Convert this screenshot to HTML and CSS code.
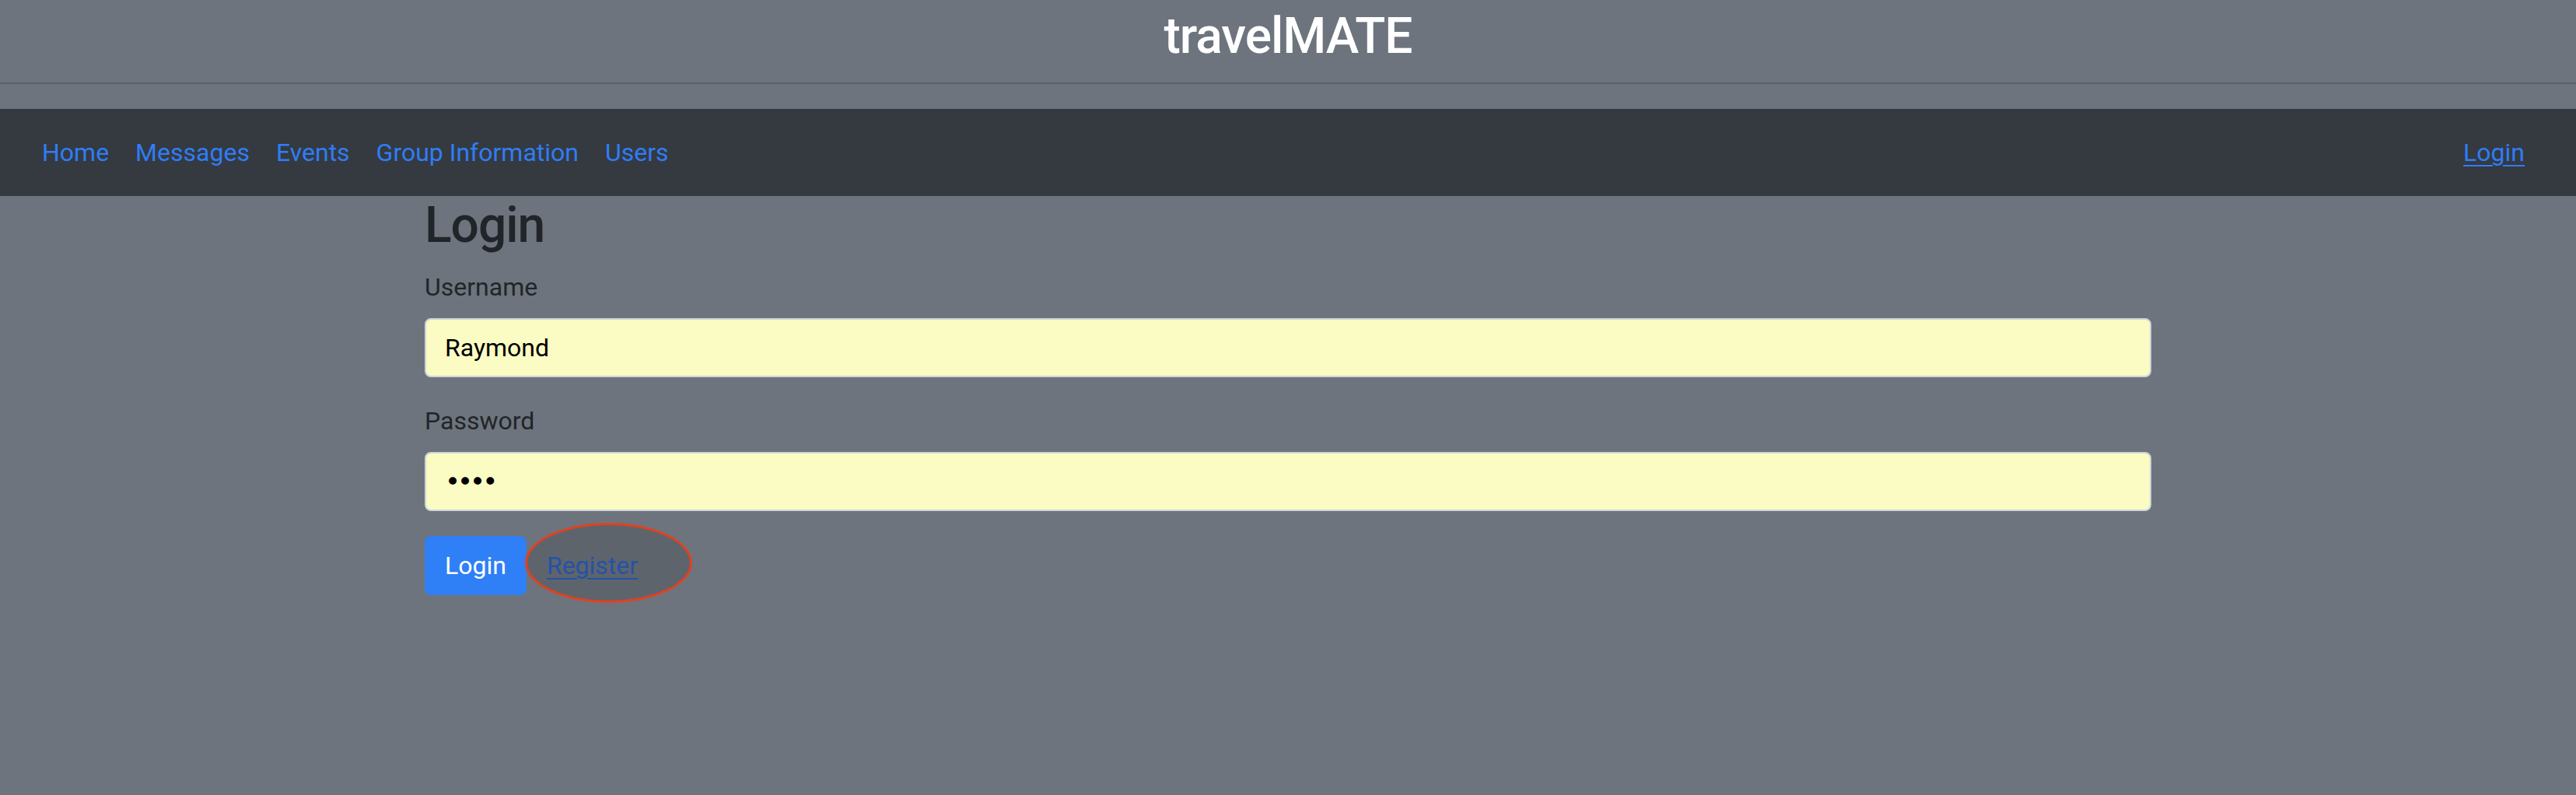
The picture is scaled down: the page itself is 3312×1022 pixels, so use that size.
FILE: index.html
```html
<!DOCTYPE html>
<html lang="en">
<head>
<meta charset="utf-8">
<title>travelMATE</title>
<link rel="stylesheet" href="styles.css">
</head>
<body>
<header class="site-header">
  <h1 class="brand">travelMATE</h1>
</header>
<nav class="navbar">
  <ul class="nav-list">
    <li><a class="nav-link" href="#">Home</a></li>
    <li><a class="nav-link" href="#">Messages</a></li>
    <li><a class="nav-link" href="#">Events</a></li>
    <li><a class="nav-link" href="#">Group Information</a></li>
    <li><a class="nav-link" href="#">Users</a></li>
  </ul>
  <a class="nav-login" href="#">Login</a>
</nav>
<main class="container">
  <h2 class="page-title">Login</h2>
  <form class="login-form">
    <div class="form-group">
      <label class="form-label" for="username">Username</label>
      <input class="form-control" id="username" type="text" value="Raymond">
    </div>
    <div class="form-group">
      <label class="form-label" for="password">Password</label>
      <input class="form-control password" id="password" type="password" value="1234">
    </div>
    <div class="actions">
      <button class="btn-primary" type="button">Login</button>
      <span class="register-wrap">
        <span class="highlight-oval"></span>
        <a class="register-link" href="#">Register</a>
      </span>
    </div>
  </form>
</main>
</body>
</html>
```
FILE: styles.css
```css
* { box-sizing: border-box; }
html, body { margin: 0; padding: 0; }
body {
  background: #6d747d;
  font-family: Roboto, "Noto Sans", "Liberation Sans", sans-serif;
  color: #212529;
  min-height: 1022px;
}
.site-header {
  height: 108px;
  padding-top: 9px;
  border-bottom: 2px solid #5c626a;
  text-align: center;
}
.brand {
  margin: 0;
  font-size: 64px;
  line-height: 76.8px;
  font-weight: 500;
  color: #ffffff;
  letter-spacing: -1px;
}
.navbar {
  margin-top: 32px;
  height: 112px;
  background: #343a40;
  display: flex;
  align-items: center;
  justify-content: space-between;
  padding: 0 66px 0 37px;
}
.nav-list {
  list-style: none;
  margin: 0;
  padding: 0;
  display: flex;
}
.nav-link {
  display: block;
  padding: 0 17px;
  font-size: 32px;
  line-height: 48px;
  color: #2f7df6;
  text-decoration: none;
}
.nav-login {
  font-size: 32px;
  line-height: 48px;
  color: #2f7df6;
  text-decoration: underline;
  text-decoration-thickness: 2px;
  text-underline-offset: 5px;
}
.container {
  width: 2220px;
  margin: 0 auto;
}
.page-title {
  margin: 0 0 16px;
  font-size: 64px;
  line-height: 76.8px;
  font-weight: 500;
  color: #212529;
  letter-spacing: -1px;
}
.form-group { margin-bottom: 32px; }
.form-label {
  display: block;
  font-size: 32px;
  line-height: 48px;
  margin-bottom: 16px;
  color: #212529;
}
.form-control {
  display: block;
  width: 100%;
  height: 76px;
  padding: 0 24px;
  font-family: inherit;
  font-size: 32px;
  color: #000;
  background: #fafcc3;
  border: 2px solid #ced4da;
  border-radius: 8px;
  outline: none;
}
.form-control.password {
  font-family: "DejaVu Sans", sans-serif;
  font-size: 34px;
  letter-spacing: -4px;
}
.actions {
  display: flex;
  align-items: center;
  gap: 26px;
}
.btn-primary {
  height: 76px;
  padding: 0 26px;
  font-family: inherit;
  font-size: 32px;
  color: #fff;
  background: #2f7ff6;
  border: none;
  border-radius: 8px;
}
.register-wrap {
  position: relative;
  display: inline-block;
}
.highlight-oval {
  position: absolute;
  left: -28px;
  top: -31px;
  width: 215px;
  height: 103px;
  border: 3px solid #e2411f;
  border-radius: 50%;
  background: rgba(40, 44, 52, 0.22);
  z-index: 0;
}
.register-link {
  position: relative;
  z-index: 1;
  font-size: 32px;
  line-height: 48px;
  color: #2452a8;
  text-decoration: underline;
  text-decoration-thickness: 2px;
  text-underline-offset: 5px;
}
```
